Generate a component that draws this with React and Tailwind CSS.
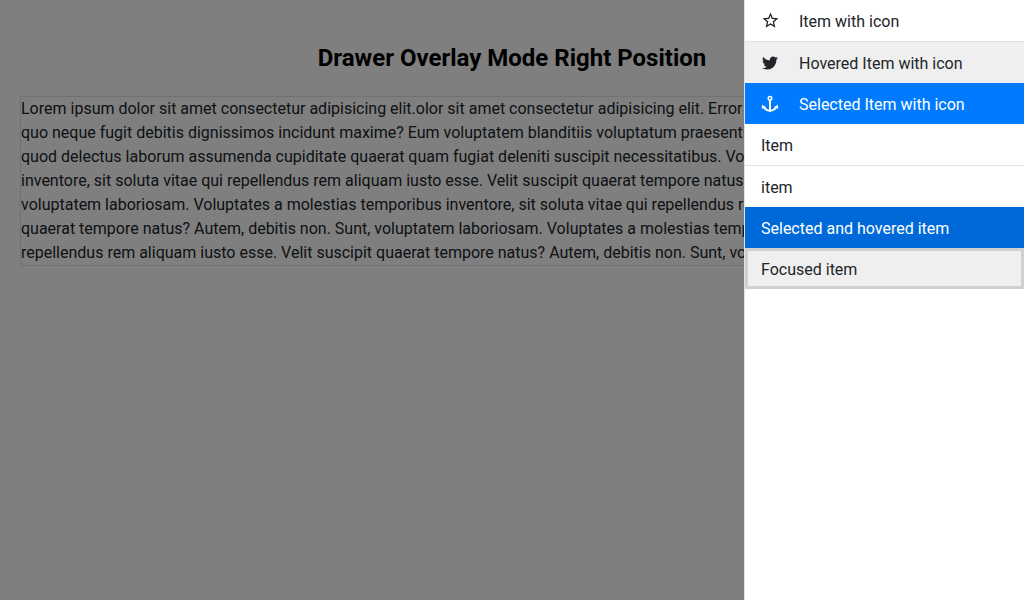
import React from "react";
import { FaTwitter } from "react-icons/fa";
import { MdStarBorder } from "react-icons/md";

function AnchorIcon() {
  return (
    <svg viewBox="0 0 18 18" width="18" height="18" fill="none" aria-hidden="true">
      <circle cx="9" cy="3.2" r="1.8" stroke="currentColor" strokeWidth="1.5" />
      <path d="M9 5v11" stroke="currentColor" strokeWidth="2" />
      <path d="M2.9 11.2C3.6 14 6 15.6 9 15.6s5.4-1.6 6.1-4.4" stroke="currentColor" strokeWidth="2" />
      <path d="M1.2 9.6L.8 13.8 5 12.4zM16.8 9.6l.4 4.2-4.2-1.4zM6.6 15.2L9 17.3l2.4-2.1z" fill="currentColor" />
    </svg>
  );
}

const items = [
  { label: "Item with icon", icon: <MdStarBorder size={19} className="shrink-0" />, look: "text-[#212529]" },
  { separator: true },
  { label: "Hovered Item with icon", icon: <FaTwitter size={16} />, look: "bg-[#efefef] text-[#212529]" },
  { label: "Selected Item with icon", icon: <AnchorIcon />, look: "bg-[#007bff] text-white", current: true },
  { label: "Item", look: "text-[#212529]" },
  { separator: true },
  { label: "item", look: "text-[#212529]" },
  { label: "Selected and hovered item", look: "bg-[#0069d9] text-white" },
  { label: "Focused item", look: "bg-[#efefef] text-[#212529] inset-ring-3 inset-ring-[#d0d0d0]" },
];

function DrawerItem({ item }) {
  return (
    <button
      type="button"
      aria-current={item.current}
      className={"flex w-full items-center px-4 py-[7px] text-left leading-6 " + item.look}
    >
      {item.icon && <span className="mr-5 flex w-[18px] shrink-0 justify-center">{item.icon}</span>}
      <span className="pt-[3px]">{item.label}</span>
    </button>
  );
}

export default function App() {
  return (
    <div className="min-h-screen bg-white font-[Roboto,sans-serif] text-base">
      <main className="px-5 pt-10">
        <h1 className="mb-5 text-center text-2xl leading-9 font-bold text-black">
          Drawer Overlay Mode Right Position
        </h1>
        <p className="border border-[#dee2e6] leading-6 text-[#212529]">
          Lorem ipsum dolor sit amet consectetur adipisicing elit.olor sit amet consectetur adipisicing elit. Error
          adipisci, nihil accusamus autem quo neque fugit debitis dignissimos incidunt maxime? Eum voluptatem
          blanditiis voluptatum praesentium, necessitatibus dolorem nemo quod delectus laborum assumenda cupiditate
          quaerat quam fugiat deleniti suscipit necessitatibus. Voluptates a molestias temporibus inventore, sit
          soluta vitae qui repellendus rem aliquam iusto esse. Velit suscipit quaerat tempore natus? Autem, debitis
          non. Sunt, voluptatem laboriosam. Voluptates a molestias temporibus inventore, sit soluta vitae qui
          repellendus rem aliquam iusto esse. Velit suscipit quaerat tempore natus? Autem, debitis non. Sunt,
          voluptatem laboriosam. Voluptates a molestias temporibus inventore, sit soluta vitae qui repellendus rem
          aliquam iusto esse. Velit suscipit quaerat tempore natus? Autem, debitis non. Sunt, voluptatem laboriosam.
        </p>
      </main>
      <div className="fixed inset-0 flex justify-end bg-black/50">
        <nav aria-label="Drawer" className="w-70 overflow-y-auto border-l border-[#dee2e6] bg-white">
          {items.map((item, i) =>
            item.separator ? <hr key={i} className="border-[#dee2e6]" /> : <DrawerItem key={i} item={item} />
          )}
        </nav>
      </div>
    </div>
  );
}
